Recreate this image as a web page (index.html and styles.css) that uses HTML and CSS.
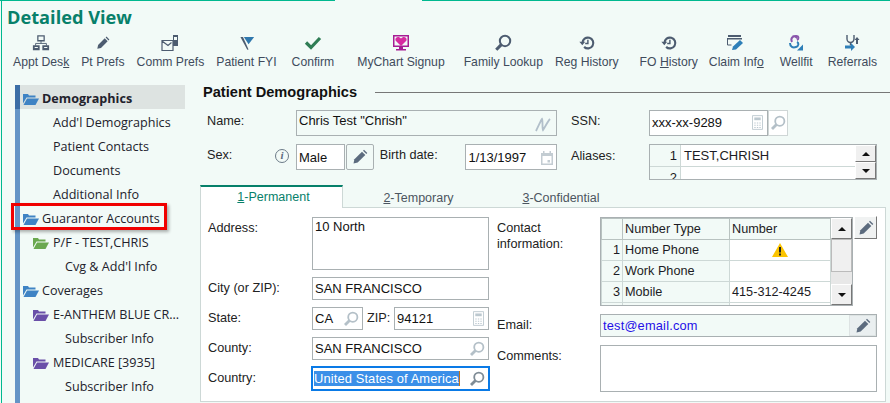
FILE: index.html
```html
<!DOCTYPE html>
<html lang="en">
<head>
  <meta charset="UTF-8" />
  <title>Detailed View</title>
  <link rel="stylesheet" href="styles.css">
</head>
<body>
  <svg class="defs" width="0" height="0">
    <symbol id="pencil" viewBox="0 0 16 16"><path d="M1.500 14.500l.9-4.200L10 2.700l3.300 3.300-7.600 7.600z"/><path d="M11 1.700l1-1 3.300 3.300-1 1z"/></symbol>
    <symbol id="lens" viewBox="0 0 16 16"><circle cx="9.800" cy="6.200" r="4.600" fill="none" stroke-width="1.800"/><path d="M6.500 9.500L2 14" fill="none" stroke-width="2.800"/></symbol>
    <symbol id="calc" viewBox="0 0 12 16"><path d="M.5.500h11v15H.5z" fill="none"/><path d="M2.500 2.500h7v3h-7z" stroke="none"/><path d="M2.500 8h1.500v1H2.500zM5.300 8h1.500v1H5.300zM8 8h1.500v1H8zM2.500 10.500h1.500v1H2.500zM5.300 10.500h1.500v1H5.300zM8 10.500h1.500v1H8zM2.500 13h1.500v1H2.500zM5.300 13h1.500v1H5.300zM8 13h1.500v1H8z" stroke="none"/></symbol>
    <symbol id="folder" viewBox="0 0 16 12"><path d="M0 1h5l1 1.500h6.500V4.500H3.500L0 10.500z"/><path d="M4 5.500h12L12.500 12H.5z"/></symbol>
    <symbol id="history" viewBox="-1 -1 20 20"><path d="M4 9a6 6 0 1 1 1.800 4.300" fill="none" stroke-width="2.400"/><path d="M.5 7.500h6.500L3.800 11.500z" stroke="none"/><path d="M10 5.500v4H7" fill="none" stroke-width="1.600"/></symbol>
  </svg>

  <div class="topline"><span class="topline-seg first"></span><span class="topline-seg rest"></span></div>

  <div class="app">
    <h1 class="title">Detailed View</h1>

    <div class="toolbar">
      <div class="tool">
        <svg class="ico" viewBox="-1 -1 20 20"><path fill="none" stroke="#4d5c70" stroke-width="1.400" d="M5.500 1h7v5.500h-7z"/><path fill="none" stroke="#4d5c70" d="M9 6.500v3M3 12V9.500h12V12"/><path fill="#4d5c70" d="M0 11.500h7.500V17H0zM10.500 11.500H18V17h-7.500z"/><path fill="#f2faf7" d="M2 13.500h3.500v1H2zM12.500 13.500H16v1h-3.500z"/></svg>
        <span>Appt Des<u>k</u></span>
      </div>
      <div class="tool">
        <svg class="ico" viewBox="0 0 18 18"><use href="#pencil" x="2" y="2" width="14" height="14" fill="#4d5c70"/></svg>
        <span>Pt Prefs</span>
      </div>
      <div class="tool">
        <svg class="ico" viewBox="0 0 18 18"><path fill="none" stroke="#4d5c70" stroke-width="1.200" d="M1 6.500h11v10H1zM1 7l6 4.500 3.500-3"/><path fill="#4d5c70" d="M12 1h5v11h-5z"/><path fill="#f2faf7" d="M13 3h3v3h-3z"/></svg>
        <span>Comm Prefs</span>
      </div>
      <div class="tool">
        <svg class="ico" viewBox="-3 -2 21 21"><path fill="#2f77ad" d="M5 1.500h12L10.500 10z"/><path fill="#4d5c70" d="M1 1.500h3l6.500 14.500-1.500.5z"/></svg>
        <span>Patient FYI</span>
      </div>
      <div class="tool tool-confirm">
        <svg class="ico" viewBox="0 0 18 18"><path fill="none" stroke="#2f7d55" stroke-width="3.200" d="M2 8.500l5 5 9-9.500"/></svg>
        <span>Confirm</span>
      </div>
      <i class="tool-sep"></i>
      <div class="tool tool-mychart">
        <svg class="ico" viewBox="0 0 18 18"><path fill="#a61c94" d="M1 1h16v12H11v2h3v1.500H4V15h3v-2H1z"/><path fill="#f2faf7" d="M2.500 2.500h13v9h-13z"/><path fill="#d62aa0" d="M9 12L3.500 6.500c-1-3.500 3.500-5 5.500-2 2-3 6.500-1.500 5.500 2z"/></svg>
        <span>MyChart Signup</span>
      </div>
      <i class="tool-sep"></i>
      <div class="tool">
        <svg class="ico"><use href="#lens" stroke="#4d5c70"/></svg>
        <span>Family Lookup</span>
      </div>
      <div class="tool tool-reg">
        <svg class="ico"><use href="#history" stroke="#4d5c70" fill="#4d5c70"/></svg>
        <span>Reg History</span>
      </div>
      <i class="tool-sep"></i>
      <div class="tool">
        <svg class="ico"><use href="#history" stroke="#4d5c70" fill="#4d5c70"/></svg>
        <span>FO <u>H</u>istory</span>
      </div>
      <div class="tool tool-claim">
        <svg class="ico" viewBox="0 0 18 18"><path fill="#4d5c70" d="M1 1h13v2H1zM0 4h15v1.500H0z"/><path fill="none" stroke="#4d5c70" d="M.5 5v6h4"/><path fill="#2e7fb8" d="M5 16l1-3.500L13 6l3 3-7 6.500z"/></svg>
        <span>Claim Inf<u>o</u></span>
      </div>
      <div class="tool tool-wellfit">
        <svg class="ico" viewBox="0 0 18 18"><path fill="none" stroke="#8a55ab" stroke-width="2" d="M5 8c-2-4 1-6 4-6 3 0 3 3 1 4"/><path fill="#8a55ab" d="M5 1.500h5v3.500z"/><path fill="none" stroke="#2e7fb8" stroke-width="2" d="M3 9c0 4 3 5 6 4 3-1 3-4 1-5"/><path fill="#2e7fb8" d="M10 16.500h6v-6z"/></svg>
        <span>Wellfit</span>
      </div>
      <div class="tool">
        <svg class="ico" viewBox="0 0 18 18"><path fill="none" stroke="#4d5c70" stroke-width="1.400" d="M4 1v4a3.500 3.500 0 0 0 7 0V1M7.500 8.500v3"/><path fill="#4d5c70" d="M14 3l2.500 3h-1.500v4h-2V6h-1.500z"/><path fill="#2e7fb8" d="M2 11.500h6V9l4 4-4 4v-2.500H2z"/></svg>
        <span>Referrals</span>
      </div>
      <i class="tool-sep"></i>
    </div>

    <div class="content">
      <nav class="sidebar">
        <ul class="tree">
          <li class="tree-item active"><svg class="folder blue"><use href="#folder"/></svg>Demographics</li>
          <li class="tree-item lvl1">Add'l Demographics</li>
          <li class="tree-item lvl1">Patient Contacts</li>
          <li class="tree-item lvl1">Documents</li>
          <li class="tree-item lvl1">Additional Info</li>
          <li class="tree-item"><svg class="folder blue"><use href="#folder"/></svg>Guarantor Accounts</li>
          <li class="tree-item sub"><svg class="folder green"><use href="#folder"/></svg>P/F - TEST,CHRIS</li>
          <li class="tree-item lvl2">Cvg &amp; Add'l Info</li>
          <li class="tree-item"><svg class="folder blue"><use href="#folder"/></svg>Coverages</li>
          <li class="tree-item sub"><svg class="folder purple"><use href="#folder"/></svg>E-ANTHEM BLUE CR...</li>
          <li class="tree-item lvl2">Subscriber Info</li>
          <li class="tree-item sub"><svg class="folder purple"><use href="#folder"/></svg>MEDICARE [3935]</li>
          <li class="tree-item lvl2">Subscriber Info</li>
        </ul>
        <div class="callout"></div>
      </nav>

      <main class="main">
        <div class="heading"><h2>Patient Demographics</h2><i class="heading-line"></i></div>

        <div class="top-form">
          <label class="lbl">Name:</label>
          <div class="field readonly">Chris Test "Chrish"
            <svg class="sig" viewBox="0 0 16 16"><path d="M1 14C4 8 6 3 7 2c1 2 0 9 1 11 2-3 5-9 7-11" fill="none" stroke="#b2bfca" stroke-width="1.800"/></svg>
          </div>
          <label class="lbl col3">SSN:</label>
          <div class="inline">
            <div class="field ssn">xxx-xx-9289<svg class="calc"><use href="#calc"/></svg></div>
            <button class="icon-btn flat"><svg class="mini"><use href="#lens" stroke="#b4c0c8"/></svg></button>
          </div>

          <div class="lbl sex-lbl">Sex:<span class="info">i</span></div>
          <div class="inline">
            <div class="field male">Male</div>
            <button class="icon-btn pen-btn"><svg class="mini"><use href="#pencil" fill="#5c6b7e"/></svg></button>
            <label class="lbl birth">Birth date:</label>
            <div class="field date">1/13/1997
              <svg class="cal" viewBox="0 0 12 14"><path fill="#c3ccd2" d="M0 2h2V0h1.500v2h5V0H10v2h2v12H0zM1.500 5v7.500h9V5z"/><path fill="#c3ccd2" d="M6.500 9H9v2.500H6.500z"/></svg>
            </div>
          </div>
          <label class="lbl col3 aliases">Aliases:</label>
          <div class="alias">
            <div class="alias-rows">
              <div class="alias-row"><b>1</b><span>TEST,CHRISH</span></div>
              <div class="alias-row"><b>2</b><span></span></div>
            </div>
            <div class="spin"><button class="arrow up"></button><button class="arrow down"></button></div>
          </div>
        </div>

        <div class="tabs">
          <div class="tab on"><u>1</u>-Permanent</div>
          <div class="tab t2"><u>2</u>-Temporary</div>
          <div class="tab t3"><u>3</u>-Confidential</div>
        </div>

        <div class="panel">
          <div class="addr">
            <label class="lbl">Address:</label>
            <div class="field tall">10 North</div>
            <label class="lbl">City (or ZIP):</label>
            <div class="field">SAN FRANCISCO</div>
            <label class="lbl">State:</label>
            <div class="inline">
              <div class="field state">CA<svg class="mini end"><use href="#lens" stroke="#b4c0c8"/></svg></div>
              <label class="lbl zip">ZIP:</label>
              <div class="field zipval">94121<svg class="calc"><use href="#calc"/></svg></div>
            </div>
            <label class="lbl">County:</label>
            <div class="field">SAN FRANCISCO<svg class="mini end"><use href="#lens" stroke="#b4c0c8"/></svg></div>
            <label class="lbl">Country:</label>
            <div class="field focus"><span class="sel">United States of America</span><svg class="mini end"><use href="#lens" stroke="#7f8c96"/></svg></div>
          </div>

          <div class="contact">
            <label class="lbl">Contact<br>information:</label>
            <div class="inline phones-wrap">
              <div class="phones">
                <table class="ptable">
                  <thead><tr><th class="n"></th><th class="ty">Number Type</th><th class="nu">Number</th></tr></thead>
                  <tbody>
                    <tr><th class="n">1</th><td class="ty">Home Phone</td><td class="nu warn"><svg class="warn-ico" viewBox="0 0 16 14"><path fill="#fbc400" d="M8 0l8 14H0z"/><path fill="#222" d="M7 4h2v5.500H7zM7 10.500h2v2H7z"/></svg></td></tr>
                    <tr><th class="n">2</th><td class="ty">Work Phone</td><td class="nu"></td></tr>
                    <tr><th class="n">3</th><td class="ty">Mobile</td><td class="nu">415-312-4245</td></tr>
                    <tr><th class="n"></th><td class="ty"></td><td class="nu"></td></tr>
                  </tbody>
                </table>
                <div class="vscroll"><button class="arrow up tall-a"></button><i class="thumb"></i><i class="track"></i><button class="arrow down tall-a"></button></div>
              </div>
              <button class="icon-btn raised"><svg class="mini"><use href="#pencil" fill="#5c6b7e"/></svg></button>
            </div>
            <label class="lbl">Email:</label>
            <div class="field email"><span>test@email.com</span><button class="icon-btn email-btn"><svg class="mini"><use href="#pencil" fill="#5c6b7e"/></svg></button></div>
            <label class="lbl">Comments:</label>
            <div class="field comments"></div>
          </div>
        </div>
      </main>
    </div>
  </div>
</body>
</html>
```

FILE: styles.css
```css
* {
  box-sizing: border-box;
}
html, body {
  margin: 0;
  height: 403px;
  overflow: hidden;
}
body {
  background-color: #f2faf7;
  color: #1c1c24;
  font-family: "Liberation Sans", Arial, sans-serif;
  font-size: 12.7px;
}
.defs {
  display: block;
  height: 0;
}
.topline {
  display: flex;
  height: 1px;
}
.topline-seg {
  background-color: #00b88f;
}
.topline-seg.first {
  width: 335px;
  margin-right: 87px;
}
.topline-seg.rest {
  flex: 1;
}
.app {
  height: 402px;
  margin-left: 1px;
  border-left: 1px solid #00b88f;
}

/* header */
.title {
  margin: 0;
  padding: 5px 0 0 5px;
  height: 31px;
  font-family: "Open Sans", sans-serif;
  font-size: 18.200px;
  font-weight: 700;
  line-height: 22px;
  color: #07806a;
}
.toolbar {
  display: flex;
  height: 40px;
  padding-left: 5px;
}
.tool {
  display: flex;
  flex-direction: column;
  align-items: center;
  padding: 2px 6px 0;
  color: #404b5c;
  white-space: nowrap;
  font-size: 12.2px;
}
.tool-confirm {
  margin-left: 3px;
  margin-right: 2px;
}
.tool-mychart {
  margin-left: -1px;
  margin-right: -3px;
}
.tool-reg {
  margin-right: -1px;
}
.tool-claim {
  margin-left: -1px;
  margin-right: 4px;
}
.tool-wellfit {
  margin-right: 3px;
}
.ico {
  width: 18px;
  height: 18px;
  margin-bottom: 3px;
}
.tool-sep {
  width: 1px;
  height: 40px;
  margin: 0 5px;
  background-color: #a8b0b0;
}

/* sidebar */
.content {
  display: flex;
  margin-top: 13px;
}
.sidebar {
  position: relative;
  width: 185px;
  margin-left: 13px;
  flex: none;
}
.tree {
  list-style: none;
  margin: 0;
  padding: 0;
  width: 170px;
  min-height: 318px;
  border-left: 5px solid #6494c6;
  font-family: "Open Sans", sans-serif;
  font-size: 12.6px;
}
.tree-item {
  display: flex;
  align-items: center;
  height: 24px;
  padding-left: 3px;
  padding-top: 3px;
  white-space: nowrap;
  color: #22222c;
}
.tree-item.active {
  background-color: #dde3e1;
  font-weight: 700;
  margin-left: -5px;
  padding-left: 3px;
  border-left: 5px solid #3c6ea6;
}
.tree-item.sub {
  padding-left: 13px;
}
.tree-item.sub .folder {
  margin-right: 4px;
}
.tree-item.lvl1 {
  padding-left: 33px;
}
.tree-item.lvl2 {
  padding-left: 45px;
}
.folder {
  width: 16px;
  height: 12px;
  margin-right: 3px;
  flex: none;
}
.folder.blue {
  fill: #3f83c4;
}
.folder.green {
  fill: #6aa84f;
}
.folder.purple {
  fill: #6a4fa8;
}
.callout {
  position: absolute;
  left: -4px;
  top: 118px;
  width: 156px;
  height: 27px;
  border: 3px solid #f00000;
  box-shadow: 2px 2px 3px rgba(0, 0, 0, 0.3);
}

/* main */
.main {
  width: 686px;
  flex: none;
}
.heading {
  display: flex;
  align-items: center;
  padding-left: 3px;
  height: 14px;
}
.heading h2 {
  margin: 0;
  font-size: 14.600px;
  font-weight: 700;
  color: #111;
}
.heading-line {
  flex: 1;
  height: 1px;
  margin-left: 18px;
  margin-right: -4px;
  background-color: #777;
}
.top-form {
  display: grid;
  grid-template-columns: 89px 261px 92px 228px;
  grid-template-rows: 26px 36px;
  row-gap: 8px;
  margin-top: 11px;
  padding-left: 7px;
}
.col3 {
  margin-left: 14px;
}
.lbl {
  padding-top: 4px;
  color: #222;
  white-space: nowrap;
}
.lbl.aliases {
  padding-top: 5px;
}
.field {
  position: relative;
  display: flex;
  align-items: center;
  height: 23px;
  padding-left: 2px;
  background-color: #fff;
  border: 1px solid #a9b0b2;
  color: #111;
  font-size: 13px;
  white-space: nowrap;
}
.inline {
  display: flex;
}
.readonly {
  height: 26px;
  padding-bottom: 5px;
  background-color: #f2faf7;
}
.sig {
  position: absolute;
  right: 5px;
  top: 6px;
  width: 16px;
  height: 16px;
}
.ssn {
  width: 119px;
  height: 26px;
  padding-bottom: 2px;
}
.calc {
  position: absolute;
  right: 4px;
  top: 50%;
  width: 11px;
  height: 15px;
  margin-top: -8px;
  fill: #bcc8cf;
  stroke: #bcc8cf;
}
.icon-btn {
  display: flex;
  align-items: center;
  justify-content: center;
  padding: 0;
  background-color: #f2faf7;
  border: 1px solid #a9b0b2;
}
.icon-btn.flat {
  width: 20px;
  height: 26px;
  border-color: #cfd6d6;
  background-color: #fff;
}
.mini {
  width: 16px;
  height: 16px;
}
.mini.end {
  position: absolute;
  right: 3px;
  top: 50%;
  margin-top: -8px;
}
.sex-lbl {
  display: flex;
  justify-content: space-between;
  padding-right: 7px;
}
.info {
  width: 14px;
  height: 14px;
  border: 1.500px solid #6c7a88;
  border-radius: 50%;
  font-family: "Liberation Serif", serif;
  font-style: italic;
  font-weight: 700;
  font-size: 11px;
  line-height: 11px;
  text-align: center;
  color: #5c6b7e;
  margin-top: 1px;
}
.male {
  width: 50px;
  height: 26px;
}
.pen-btn {
  width: 28px;
  height: 26px;
  margin-left: 1px;
  border-radius: 2px;
}
.birth {
  width: 87px;
  margin-left: 6px;
}
.date {
  width: 93px;
  height: 26px;
}
.cal {
  position: absolute;
  right: 3px;
  top: 6px;
  width: 12px;
  height: 14px;
}
.alias {
  display: flex;
  width: 228px;
  height: 36px;
  background-color: #fff;
  border: 1px solid #a9b0b2;
  overflow: hidden;
  font-size: 13px;
}
.alias-rows {
  flex: 1;
}
.alias-row {
  display: flex;
  height: 22px;
  border-bottom: 1px solid #cdd8d6;
  line-height: 21px;
}
.alias-row b {
  width: 31px;
  padding-right: 3px;
  background-color: #f2faf7;
  border-right: 1px solid #cdd8d6;
  font-weight: 400;
  text-align: right;
}
.alias-row span {
  padding-left: 3px;
}
.spin {
  width: 21px;
  flex: none;
}
.arrow {
  display: block;
  position: relative;
  width: 100%;
  height: 17px;
  padding: 0;
  background-color: #f0f0f0;
  border: 1px solid #fff;
  border-right-color: #777;
  border-bottom-color: #777;
}
.arrow::after {
  content: "";
  position: absolute;
  left: 50%;
  top: 50%;
  margin: -2px 0 0 -4px;
  border: 4px solid transparent;
  border-top: 0;
  border-bottom: 4px solid #111;
}
.arrow.down::after {
  border-bottom: 0;
  border-top: 4px solid #111;
}

/* tabs */
.tabs {
  display: flex;
  height: 23px;
  margin-top: 5px;
  position: relative;
  z-index: 1;
  font-size: 12.500px;
}
.tab {
  text-align: center;
  padding: 6px 0 0 4px;
  color: #4c5560;
  width: 147px;
}
.tab.on {
  width: 143px;
  height: 23px;
  padding-top: 3px;
  background-color: #fff;
  border-top: 2px solid #07806a;
  border-right: 1px solid #cdd8d6;
  border-left: 1px solid #cdd8d6;
  color: #07806a;
}
.tab.t3 {
  width: 142px;
  padding-left: 0;
}
.panel {
  display: flex;
  height: 195px;
  margin-top: -1px;
  padding: 9px 0 0 7px;
  background-color: #fff;
  border: 1px solid #cdd8d6;
}
.addr {
  display: grid;
  grid-template-columns: 104px 177px;
  grid-template-rows: 53px;
  grid-auto-rows: 23px;
  row-gap: 7px;
  align-content: start;
  width: 289px;
  flex: none;
}
.tall {
  height: 53px;
  padding-top: 1px;
  align-items: flex-start;
}
.state {
  width: 51px;
}
.panel .zip {
  width: 31px;
  padding-left: 4px;
}
.zipval {
  width: 95px;
}
.focus {
  height: 25px;
  width: 179px;
  margin: -1px 0 0 -1px;
  border: 2px solid #0a7ae6;
  padding-left: 1px;
}
.sel {
  background-color: #3b8fe8;
  border-right: 1px solid #c0701a;
  color: #fff;
  font-size: 12.900px;
  letter-spacing: 0.12px;
}

/* contact */
.contact {
  display: grid;
  grid-template-columns: 103px 277px;
  grid-template-rows: 89px 23px 47px;
  row-gap: 8px;
  align-content: start;
  flex: none;
}
.contact .lbl:first-child {
  padding-top: 3px;
  line-height: 16px;
}
.phones-wrap {
  justify-content: space-between;
}
.phones {
  display: flex;
  width: 253px;
  height: 89px;
  border: 1px solid #a9b0b2;
  overflow: hidden;
  background-color: #fff;
}
.ptable {
  width: 230px;
  table-layout: fixed;
  border-collapse: collapse;
  flex: none;
  align-self: flex-start;
}
.ptable th, .ptable td {
  height: 21px;
  padding: 0 2px;
  border: 1px solid #cdd8d6;
  font-weight: 400;
  text-align: left;
}
.ptable thead th {
  background-color: #f2faf7;
  border-color: #b8c2c0;
}
.ptable .n {
  width: 21px;
  background-color: #f2faf7;
  text-align: right;
}
.ptable .ty {
  width: 107px;
}
.ptable td.ty {
  background-color: #f2faf7;
}
.warn-ico {
  display: block;
  width: 16px;
  height: 14px;
  margin: 0 auto;
}
.vscroll {
  display: flex;
  flex-direction: column;
  width: 21px;
  flex: none;
}
.tall-a {
  height: 21px;
  flex: none;
}
.thumb {
  height: 33px;
  background-color: #f0f0f0;
  border: 1px solid #bbb;
  flex: none;
}
.track {
  flex: 1;
  background-color: #e8e8e8;
}
.raised {
  width: 23px;
  height: 23px;
  margin-top: -1px;
  border-color: #fff #777 #777 #fff;
  background-color: #f0f2f2;
}
.email {
  justify-content: space-between;
  padding-right: 0;
  background-color: #f2faf7;
  color: #2410e8;
  font-size: 12.800px;
  letter-spacing: 0.2px;
}
.email-btn {
  width: 27px;
  height: 21px;
  border: 1px solid #dde3e3;
  background-color: #eaeff0;
}
.comments {
  height: 47px;
}
```
